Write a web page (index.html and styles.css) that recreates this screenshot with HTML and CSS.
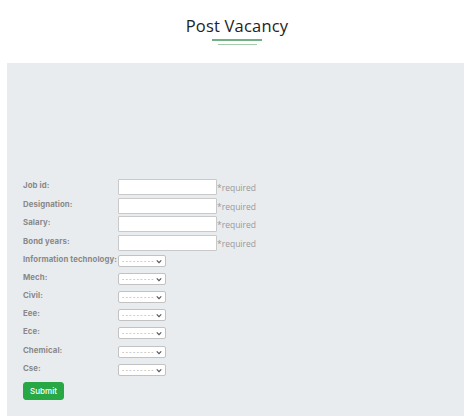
FILE: index.html
```html
<!DOCTYPE html>
<html>
<head>
<meta charset="utf-8">
<link rel="stylesheet" href="styles.css">
</head>
<body>
<header class="head">
  <h1 class="title">Post Vacancy</h1>
  <div class="line1"></div>
  <div class="line2"></div>
</header>
<section class="panel">
  <form class="form">
    <div class="row irow"><label class="lbl">Job id:</label><input class="inp" type="text"><span class="req">*required</span></div>
    <div class="row irow"><label class="lbl">Designation:</label><input class="inp" type="text"><span class="req">*required</span></div>
    <div class="row irow"><label class="lbl">Salary:</label><input class="inp" type="text"><span class="req">*required</span></div>
    <div class="row irow"><label class="lbl">Bond years:</label><input class="inp" type="text"><span class="req">*required</span></div>
    <div class="row srow"><label class="lbl">Information technology:</label><span class="selwrap"><select class="sel"><option>---------</option></select><svg class="chev" viewBox="0 0 8 6" width="6" height="5"><path d="M1 1.5 L4 4.5 L7 1.5" fill="none" stroke="#555" stroke-width="1.6"/></svg></span></div>
    <div class="row srow"><label class="lbl">Mech:</label><span class="selwrap"><select class="sel"><option>---------</option></select><svg class="chev" viewBox="0 0 8 6" width="6" height="5"><path d="M1 1.5 L4 4.5 L7 1.5" fill="none" stroke="#555" stroke-width="1.6"/></svg></span></div>
    <div class="row srow"><label class="lbl">Civil:</label><span class="selwrap"><select class="sel"><option>---------</option></select><svg class="chev" viewBox="0 0 8 6" width="6" height="5"><path d="M1 1.5 L4 4.5 L7 1.5" fill="none" stroke="#555" stroke-width="1.6"/></svg></span></div>
    <div class="row srow"><label class="lbl">Eee:</label><span class="selwrap"><select class="sel"><option>---------</option></select><svg class="chev" viewBox="0 0 8 6" width="6" height="5"><path d="M1 1.5 L4 4.5 L7 1.5" fill="none" stroke="#555" stroke-width="1.6"/></svg></span></div>
    <div class="row srow"><label class="lbl">Ece:</label><span class="selwrap"><select class="sel"><option>---------</option></select><svg class="chev" viewBox="0 0 8 6" width="6" height="5"><path d="M1 1.5 L4 4.5 L7 1.5" fill="none" stroke="#555" stroke-width="1.6"/></svg></span></div>
    <div class="row srow"><label class="lbl">Chemical:</label><span class="selwrap"><select class="sel"><option>---------</option></select><svg class="chev" viewBox="0 0 8 6" width="6" height="5"><path d="M1 1.5 L4 4.5 L7 1.5" fill="none" stroke="#555" stroke-width="1.6"/></svg></span></div>
    <div class="row srow"><label class="lbl">Cse:</label><span class="selwrap"><select class="sel"><option>---------</option></select><svg class="chev" viewBox="0 0 8 6" width="6" height="5"><path d="M1 1.5 L4 4.5 L7 1.5" fill="none" stroke="#555" stroke-width="1.6"/></svg></span></div>
    <button class="btn" type="button">Submit</button>
  </form>
</section>
</body>
</html>
```
FILE: styles.css
```css
html, body { margin: 0; padding: 0; background: #fff; }
body { font-family: Inter, "Open Sans", sans-serif; overflow: hidden; }
.head { height: 63px; padding-left: 10px; display: flex; flex-direction: column; align-items: center; box-sizing: border-box; padding-top: 15px; }
.title { margin: 0; font-family: "Open Sans", sans-serif; font-weight: 400; font-size: 16.5px; line-height: 22px; color: #222; letter-spacing: 0.2px; }
.line1 { width: 50px; height: 2px; background: #72b082; margin-top: 2px; }
.line2 { width: 39px; height: 1px; background: #a4cbae; margin-top: 3px; }
.panel { margin-left: 7px; height: 353px; background: #e9ecef; box-sizing: border-box; padding: 116px 16px 0; }
.form { display: flex; flex-direction: column; }
.row { display: flex; align-items: flex-start; }
.irow { height: 18.67px; }
.srow { height: 18.2px; }
.lbl { width: 95px; flex: none; white-space: nowrap; font-family: Inter, sans-serif; font-weight: 700; font-size: 7.8px; letter-spacing: 0.1px; line-height: 11px; color: #888; padding-top: 1px; }
.srow .lbl { padding-top: 0; }
.inp { width: 99px; height: 16px; box-sizing: border-box; margin: 0; padding: 0 3px; border: 1px solid #c9c9c9; background: #fff; border-radius: 1px; }
.req { font-family: "Open Sans", sans-serif; font-size: 8.5px; color: #999; padding-top: 3px; line-height: 11px; }
.selwrap { position: relative; display: block; margin-top: 1px; width: 48px; height: 12px; }
.sel { appearance: none; -webkit-appearance: none; display: block; width: 48px; height: 12px; box-sizing: border-box; margin: 0; padding: 0 0 0 3px; font-family: "DejaVu Sans", sans-serif; font-size: 6px; letter-spacing: 1.5px; line-height: 10px; border: 1px solid #c2c2c2; border-radius: 2px; background: #fff; color: #888; }
.chev { position: absolute; right: 4px; top: 4px; }
.btn { align-self: flex-start; margin-top: 1px; width: 41px; height: 18px; padding: 0; border: 1px solid #28a745; border-radius: 3px; background: #28a745; color: #fff; font-family: Inter, sans-serif; font-size: 8px; font-weight: 500; }
```
